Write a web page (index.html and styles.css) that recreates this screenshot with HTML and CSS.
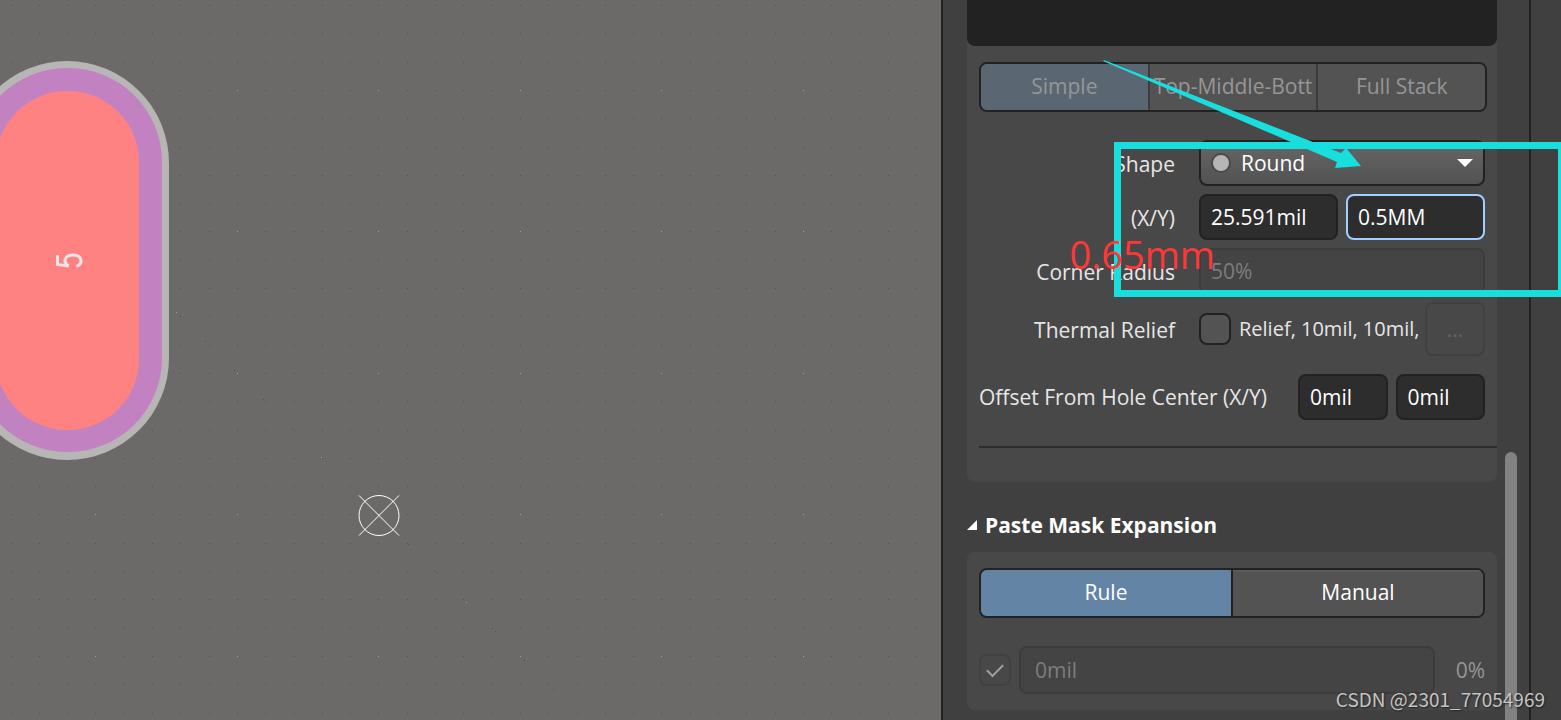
FILE: index.html
```html
<!DOCTYPE html>
<html lang="en">
	<head>
		<meta name="viewport" content="width=device-width, initial-scale=1.0">
		<meta charset="UTF-8">
		<title>Pad Properties</title>
		<link rel="stylesheet" href="styles.css">
	</head>
	<body>
		<div class="workspace">

			<main class="board">
				<svg class="board-drawing" width="100%" height="100%">
					<g id="grid" shape-rendering="crispEdges"></g>
					<rect x="-35" y="61" width="204" height="399" rx="102" fill="#b7b5b6"/>
					<rect x="-27" y="68" width="189" height="384" rx="94" fill="#c282c1"/>
					<rect x="-4" y="91" width="143" height="339" rx="71" fill="#ff8282"/>
					<path d="M57.500 255v9.500l11 1.500c-6-4-4-11 4.500-11s11 8 3.500 11.500" fill="none" stroke="#e6e6e6" stroke-width="3"/>
					<g fill="none" stroke="#fff">
						<circle cx="379" cy="515.5" r="20"/>
						<path d="M359 495.500l40 40M399 495.500l-40 40"/>
					</g>
				</svg>
			</main>

			<aside class="panel">
				<div class="panel-body">
					<section class="card card-stack">
						<div class="preview"></div>
						<div class="toggle toggle-disabled">
							<button type="button" class="active" disabled>Simple</button>
							<button type="button" disabled>Top-Middle-Bott</button>
							<button type="button" disabled>Full Stack</button>
						</div>

						<div class="form">
							<div class="row">
								<label for="shape">Shape</label>
								<div class="select-box">
									<select id="shape">
										<option>Round</option>
										<option>Rectangular</option>
										<option>Octagonal</option>
									</select>
									<span class="shape-dot"></span>
									<svg class="arrow" width="16" height="8"><path d="M0 0h16l-8 8z" fill="#fff"/></svg>
								</div>
							</div>
							<div class="row">
								<label for="size-x">(X/Y)</label>
								<div class="pair">
									<input id="size-x" type="text" value="25.591mil">
									<input class="focused" type="text" value="0.5MM" aria-label="Y size">
								</div>
							</div>
							<div class="row">
								<label for="radius">Corner Radius</label>
								<input id="radius" type="text" value="50%" disabled>
							</div>
							<div class="row">
								<label for="relief">Thermal Relief</label>
								<div class="relief">
									<input id="relief" type="checkbox">
									<span class="relief-text">Relief, 10mil, 10mil,</span>
									<button type="button" class="more" disabled>...</button>
								</div>
							</div>
						</div>

						<div class="offset-row">
							<label for="offset-x">Offset From Hole Center (X/Y)</label>
							<div class="pair">
								<input id="offset-x" type="text" value="0mil">
								<input type="text" value="0mil" aria-label="Y offset">
							</div>
						</div>
						<hr>
					</section>

					<h2>
						<svg width="10" height="10"><path d="M10 0v10H0z" fill="#fff"/></svg>
						Paste Mask Expansion
					</h2>

					<section class="card card-mask">
						<div class="toggle">
							<button type="button" class="active">Rule</button>
							<button type="button">Manual</button>
						</div>
						<div class="mask-row">
							<input type="checkbox" checked disabled aria-label="Expansion enabled">
							<input type="text" value="0mil" disabled aria-label="Expansion">
							<span class="percent">0%</span>
						</div>
					</section>
				</div>
				<div class="scroll"><div class="scroll-thumb"></div></div>
				<div class="panel-edge"></div>

				<!-- markup over the size fields -->
				<svg class="markup" width="491" height="300">
					<path d="M47.500 145.500h444v148h-444z" fill="none" stroke="#18dede" stroke-width="7"/>
					<path d="M34 60L271 153L276 148L291 166L265 168L267 162L33 61Z" fill="#18dede"/>
				</svg>
				<span class="note">0.65mm</span>
				<span class="watermark">CSDN @2301_77054969</span>
			</aside>
		</div>

		<script type="text/javascript">
		const grid = document.getElementById("grid");
		const step = 28.3;

		function dot(x, y, light) {
			const r = document.createElementNS("http://www.w3.org/2000/svg", "rect");
			r.setAttribute("x", Math.round(x));
			r.setAttribute("y", Math.round(y));
			r.setAttribute("width", 1);
			r.setAttribute("height", 1);
			r.setAttribute("fill", light ? "#a5a5a3" : "#50504e");
			grid.appendChild(r);
		}

		/* every fifth crossing is a major one */
		for (let i = 0; i < 34; i++) {
			for (let j = 0; j < 26; j++) {
				dot(10.5 + i * step, 5 + j * step, i % 5 === 3 && j % 5 === 3);
			}
		}
		for (let k = 0; k < 14; k++) {
			dot(176 + k * 29, 312 + k * 29, k % 5 === 0);
		}
		</script>
	</body>
</html>
```
FILE: styles.css
```css
* {
	box-sizing: border-box;
}

body {
	margin: 0;
	background: #404040;
	color: #e6e6e6;
	font-family: "Open Sans", "Noto Sans", sans-serif;
	font-size: 21px;
	line-height: 30px;
}

.workspace {
	display: flex;
	height: 100vh;
	overflow: hidden;
}

.board {
	flex: 1;
	min-width: 0;
	background: #6b6a68;
}

.board-drawing {
	display: block;
}

.panel {
	position: relative;
	display: flex;
	flex: 0 0 620px;
	border-left: 2px solid #222;
}

.panel-body {
	flex: 1;
	min-width: 0;
	padding-left: 24px;
}

.card {
	background: #484848;
	border-radius: 8px;
	padding: 0 12px;
}

.card-stack {
	border-top-left-radius: 0;
	border-top-right-radius: 0;
	padding-bottom: 34px;
}

.preview {
	height: 46px;
	margin: 0 -12px 16px;
	background: #222;
	border-radius: 0 0 8px 8px;
}

.toggle {
	display: flex;
	height: 50px;
	border: 2px solid #222;
	border-radius: 8px;
	overflow: hidden;
}

.toggle button {
	flex: 1 1 0;
	min-width: 0;
	padding: 0 0 2px;
	border: 0;
	background: #535353;
	box-shadow: inset 0 2px #5c5c5c;
	color: #fff;
	font: inherit;
	white-space: nowrap;
	overflow: hidden;
}

.toggle button + button {
	border-left: 2px solid #222;
}

.toggle .active {
	background: #6484a6;
	box-shadow: none;
}

.toggle-disabled {
	margin-right: -2px;
}

.toggle-disabled button {
	box-shadow: none;
	color: #969696;
}

.toggle-disabled button + button {
	border-color: #3c3c3c;
}

.toggle-disabled .active {
	background: #5a6773;
}

.form {
	display: flex;
	flex-direction: column;
	gap: 8px;
	margin-top: 28px;
}

.row {
	display: grid;
	grid-template-columns: 1fr 286px;
	align-items: center;
	column-gap: 24px;
}

.row label {
	padding-top: 2px;
	text-align: right;
}

input[type="text"],
select {
	width: 100%;
	min-width: 0;
	height: 46px;
	padding: 0 10px;
	border: 2px solid #222;
	border-radius: 8px;
	background: #2d2d2d;
	color: #fff;
	font: inherit;
}

input[type="text"]:disabled {
	border-color: #3c3c3c;
	background: #444;
	color: #7d7d7d;
}

input.focused {
	border-color: #a0d0ff;
}

.select-box {
	position: relative;
}

select {
	display: block;
	appearance: none;
	padding-left: 40px;
	background: linear-gradient(#666, #525252);
}

.shape-dot {
	position: absolute;
	left: 12px;
	top: 13px;
	width: 20px;
	height: 20px;
	border: 2px solid #4b4b4b;
	border-radius: 50%;
	background: #b7b5b6;
}

.arrow {
	position: absolute;
	right: 12px;
	top: 19px;
}

.pair {
	display: flex;
	gap: 8px;
}

.relief {
	display: flex;
	align-items: center;
}

input[type="checkbox"] {
	flex: none;
	appearance: none;
	width: 32px;
	height: 32px;
	margin: 0 8px 0 0;
	border: 2px solid #222;
	border-radius: 8px;
	background: #535353;
}

input[type="checkbox"]:disabled {
	border-color: #404040;
	background: #484848;
}

input[type="checkbox"]:checked {
	display: grid;
	place-items: center;
}

input[type="checkbox"]:checked::before {
	content: "";
	width: 14px;
	height: 7px;
	margin-bottom: 4px;
	border-left: 2px solid #a0a0a0;
	border-bottom: 2px solid #a0a0a0;
	transform: rotate(-45deg);
}

.relief-text {
	flex: 1;
	min-width: 0;
	font-size: 20px;
	white-space: nowrap;
}

.more {
	flex: none;
	width: 60px;
	height: 54px;
	border: 2px solid #404040;
	border-radius: 8px;
	background: #484848;
	color: #646464;
	font: inherit;
}

.offset-row {
	display: flex;
	align-items: center;
	justify-content: space-between;
	margin-top: 18px;
	white-space: nowrap;
}

.offset-row .pair {
	flex: 0 0 187px;
}

hr {
	height: 2px;
	margin: 26px -12px 0 0;
	border: 0;
	background: #2d2d2d;
}

h2 {
	display: flex;
	align-items: center;
	gap: 8px;
	margin: 28px 0 12px;
	color: #fff;
	font-size: 21px;
	font-weight: 700;
}

.card-mask {
	padding: 16px 12px;
}

.mask-row {
	display: flex;
	align-items: center;
	margin-top: 28px;
}

.mask-row input[type="text"] {
	flex: 1;
	height: 48px;
	padding-left: 14px;
}

.percent {
	flex: 0 0 50px;
	color: #969696;
	text-align: right;
}

.scroll {
	flex: 0 0 32px;
	padding: 452px 12px 0 8px;
}

.scroll-thumb {
	height: 100%;
	border-radius: 6px 6px 0 0;
	background: #828282;
}

.panel-edge {
	flex: 0 0 32px;
	border-left: 2px solid #222;
}

.markup {
	position: absolute;
	top: 0;
	right: 0;
}

.note {
	position: absolute;
	top: 228px;
	right: 346px;
	color: #ff3737;
	font-size: 38px;
	line-height: 52px;
}

.watermark {
	position: absolute;
	right: 16px;
	bottom: 6px;
	color: #c4c4c4;
	font-family: "Noto Sans CJK SC", sans-serif;
	font-size: 19px;
	text-shadow: 1px 1px 2px #222;
}
```
